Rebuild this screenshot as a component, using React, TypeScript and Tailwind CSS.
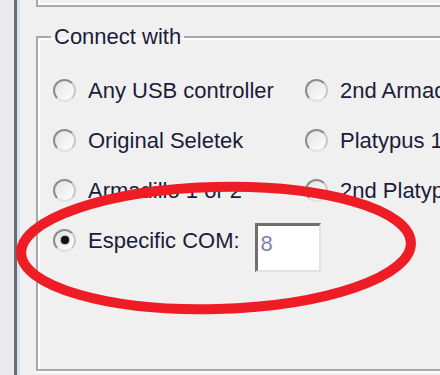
import React from "react"

type Opt = { label: string; checked?: boolean }

const rows: [Opt, Opt | null][] = [
  [{ label: "Any USB controller" }, { label: "2nd Armadillo" }],
  [{ label: "Original Seletek" }, { label: "Platypus 1 or 2" }],
  [{ label: "Armadillo 1 or 2" }, { label: "2nd Platypus" }],
  [{ label: "Especific COM:", checked: true }, null],
]

function Radio({ checked }: { checked?: boolean }) {
  return (
    <span className="w-[23px] h-[23px] shrink-0 rounded-full border-2 border-t-[#8c8c8c] border-l-[#8c8c8c] border-r-[#c9c9c9] border-b-[#e2e2e2] bg-gradient-to-br from-[#e4e4e4] to-white flex items-center justify-center">
      {checked && <span className="w-[8px] h-[8px] rounded-full bg-[#111] shadow-[0_0_2px_#333]" />}
    </span>
  )
}

export default function App() {
  return (
    <div className="relative w-[440px] h-[375px] overflow-hidden bg-[#f0f0f0] flex font-['Liberation_Sans',Arial,sans-serif] text-[22px] text-[#1c1c3a]">
      <div className="w-[14px] shrink-0 bg-[#e9e9ef]" />
      <div className="w-[3px] shrink-0 bg-[#6b6b6b]" />
      <div className="w-[3px] shrink-0 bg-[#d3e4f4]" />
      <div className="flex-1 pl-[16px] flex flex-col">
        <div className="h-[7px] w-[460px] border-l-2 border-b-2 border-[#a8a8a8] shadow-[inset_2px_-2px_0_#ffffff]" />
        <fieldset className="mt-[17px] w-[460px] h-[347px] border-2 border-[#a8a8a8] shadow-[inset_2px_2px_0_#ffffff,0_2px_0_#ffffff]">
          <legend className="ml-[13px] px-[3px] leading-[26px]">Connect with</legend>
          <div className="pl-[15px] pt-[15px] grid grid-cols-[252px_1fr]">
            {rows.map(([a, b], i) => (
              <React.Fragment key={i}>
                <div className="h-[50px] flex items-center whitespace-nowrap">
                  <Radio checked={a.checked} />
                  <span className="ml-[12px] shrink-0">{a.label}</span>
                  {a.checked && (
                    <div className="shrink-0 mt-[15px] ml-[15px] w-[66px] h-[49px] bg-white border-t-[3px] border-l-[3px] border-[#6f6f6f] border-r-2 border-b-2 border-r-[#e2e2e2] border-b-[#e2e2e2] pl-[3px] pt-[5px] leading-[26px] text-[#8383a8]">
                      8
                    </div>
                  )}
                </div>
                <div className="h-[50px] flex items-center whitespace-nowrap">
                  {b && (
                    <>
                      <Radio />
                      <span className="ml-[12px]">{b.label}</span>
                    </>
                  )}
                </div>
              </React.Fragment>
            ))}
          </div>
        </fieldset>
      </div>
      <svg className="absolute inset-0 pointer-events-none" width="440" height="375" viewBox="0 0 440 375">
        <ellipse cx="216" cy="248" rx="195" ry="61" fill="none" stroke="#ee1c25" strokeWidth="10" transform="rotate(-1.5 216 248)" />
      </svg>
    </div>
  )
}
